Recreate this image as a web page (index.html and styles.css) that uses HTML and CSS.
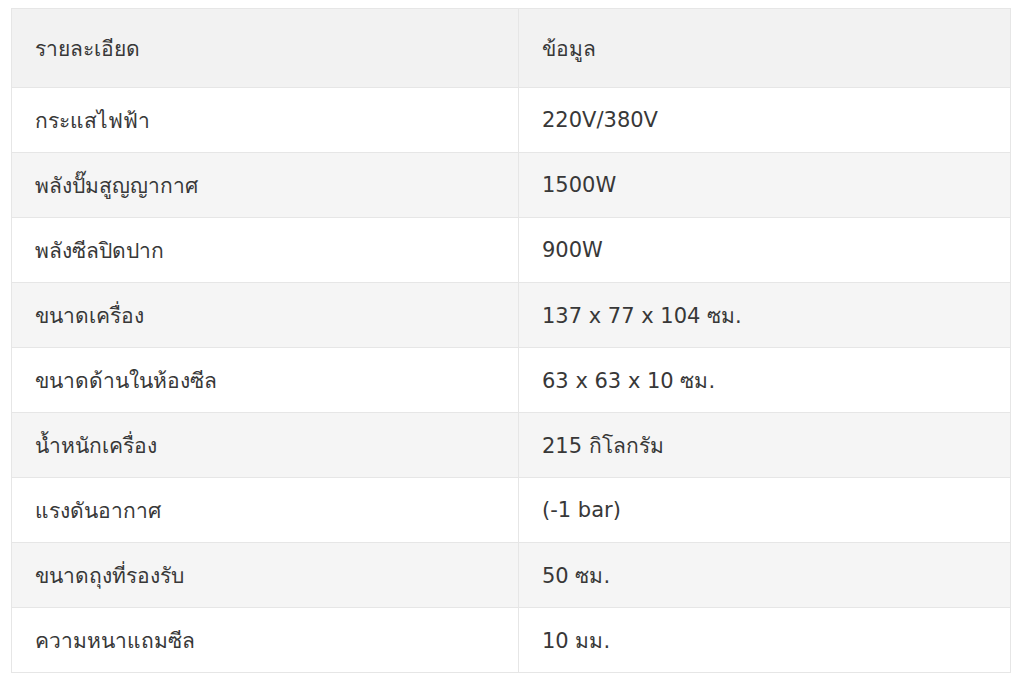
FILE: index.html
```html
<!DOCTYPE html>
<html lang="th">
<head>
<meta charset="utf-8">
<link rel="stylesheet" href="styles.css">
</head>
<body>
<table class="spec">
  <thead>
    <tr><th>รายละเอียด</th><th>ข้อมูล</th></tr>
  </thead>
  <tbody>
    <tr><td>กระแสไฟฟ้า</td><td>220V/380V</td></tr>
    <tr><td>พลังปั๊มสูญญากาศ</td><td>1500W</td></tr>
    <tr><td>พลังซีลปิดปาก</td><td>900W</td></tr>
    <tr><td>ขนาดเครื่อง</td><td>137 x 77 x 104 ซม.</td></tr>
    <tr><td>ขนาดด้านในห้องซีล</td><td>63 x 63 x 10 ซม.</td></tr>
    <tr><td>น้ำหนักเครื่อง</td><td>215 กิโลกรัม</td></tr>
    <tr><td>แรงดันอากาศ</td><td>(-1 bar)</td></tr>
    <tr><td>ขนาดถุงที่รองรับ</td><td>50 ซม.</td></tr>
    <tr><td>ความหนาแถมซีล</td><td>10 มม.</td></tr>
  </tbody>
</table>
</body>
</html>
```
FILE: styles.css
```css
html, body {
  margin: 0;
  padding: 0;
  background: #ffffff;
}
body {
  padding: 8px 0 0 11px;
  font-family: "DejaVu Sans", "Noto Sans", sans-serif;
  color: #383838;
}
.spec {
  width: 1000px;
  border-collapse: collapse;
  table-layout: fixed;
  font-size: 21px;
}
.spec th, .spec td {
  border: 1px solid #e6e6e6;
  text-align: left;
  font-weight: normal;
  padding: 0 23px;
  vertical-align: middle;
}
.spec th {
  height: 78px;
  background: #f2f2f2;
}
.spec td {
  height: 64px;
}
.spec th:first-child, .spec td:first-child {
  width: 507px;
  box-sizing: border-box;
}
.spec tbody tr:nth-child(even) td {
  background: #f5f5f5;
}
```
